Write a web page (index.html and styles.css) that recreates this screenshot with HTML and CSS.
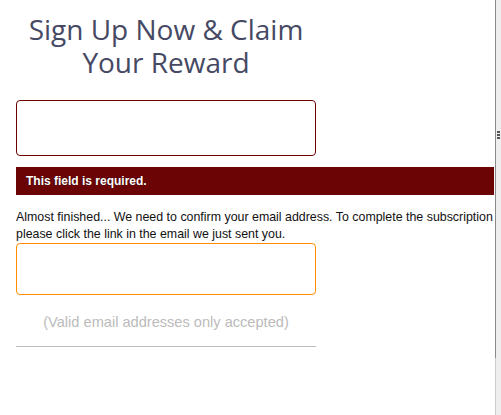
FILE: index.html
```html
<!DOCTYPE html>
<html lang="en">
<head>
  <meta charset="UTF-8" />
  <meta name="viewport" content="width=device-width, initial-scale=1.0"/>
  <title>Sign Up</title>
  <link rel="stylesheet" href="styles.css">
</head>
<body>

  <div class="frame">
    <div class="pane">
      <div class="signup">
        <h2 class="title">Sign Up Now &amp; Claim Your Reward</h2>

        <input type="text" class="field field-error" />
        <div class="error-bar">This field is required.</div>

        <p class="notice">Almost finished... We need to confirm your email address. To complete the subscription please click the link in the email we just sent you.</p>

        <input type="email" class="field field-focus" />
        <div class="hint">(Valid email addresses only accepted)</div>
        <hr class="divider" />
      </div>
    </div>

    <div class="splitter">
      <div class="grip">
        <span></span><span></span><span></span>
      </div>
    </div>
  </div>

</body>
</html>
```

FILE: styles.css
```css
* {
  box-sizing: border-box;
  margin: 0;
  padding: 0;
}
html, body {
  height: 100%;
  width: 100%;
  background: #fff;
}
.frame {
  display: flex;
  height: 100vh;
}
.pane {
  width: 495px;
  overflow: hidden;
  padding: 13px 0 0 16px;
}
.signup {
  width: 478px;
  font-family: "Liberation Sans", Arial, sans-serif;
}
.title {
  width: 300px;
  text-align: center;
  font-family: "Open Sans", sans-serif;
  font-weight: 500;
  font-size: 28px;
  line-height: 33px;
  color: #464963;
  margin-bottom: 21px;
}
.field {
  display: block;
  width: 300px;
  border-radius: 4px;
  background: #fff;
  outline: none;
}
.field-error {
  height: 56px;
  border: 1px solid #6b0000;
}
.field-focus {
  height: 52px;
  border: 1px solid #ff8c00;
}
.error-bar {
  margin-top: 11px;
  width: 478px;
  height: 28px;
  padding: 7px 10px;
  background: #6b0505;
  color: #fff;
  font-size: 12px;
  font-weight: bold;
  text-shadow: 0 0 1px rgba(0, 0, 0, 0.6);
}
.notice {
  margin-top: 14px;
  font-size: 12.4px;
  line-height: 17px;
  color: #111;
}
.hint {
  width: 300px;
  margin-top: 19px;
  text-align: center;
  font-size: 14.6px;
  color: #bbb;
}
.divider {
  width: 300px;
  margin-top: 16px;
  border: none;
  border-top: 1px solid #bbb;
}
.splitter {
  flex: 1;
  position: relative;
  background: #eee;
  border-left: 1px solid #ccc;
}
.splitter::before {
  content: "";
  position: absolute;
  top: 0;
  left: -1px;
  width: 1px;
  height: 358px;
  background: #8a8a8a;
}
.grip {
  position: absolute;
  top: 131px;
  left: 1px;
  display: flex;
  flex-direction: column;
  gap: 1px;
}
.grip span {
  width: 3px;
  height: 2px;
  background: #555;
}
```
